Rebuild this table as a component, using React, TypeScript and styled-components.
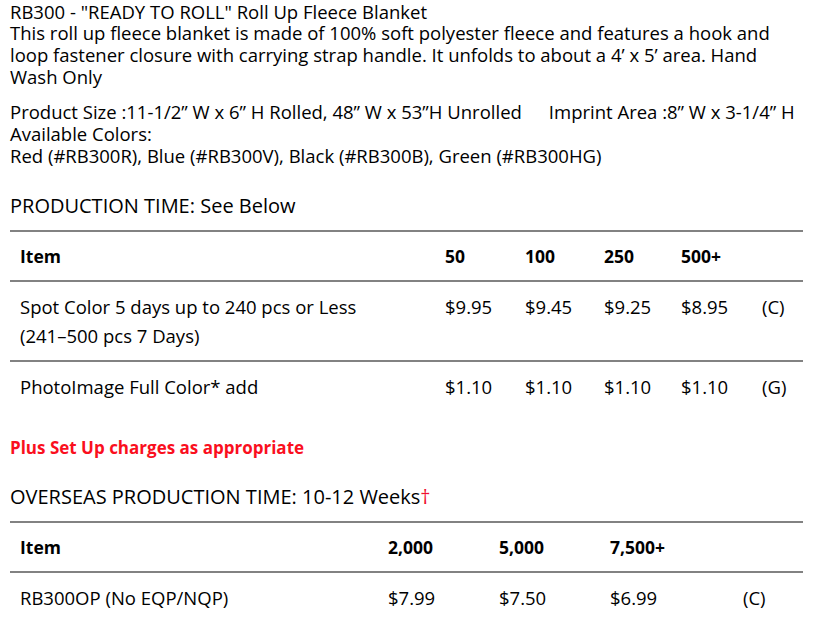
import React from "react";
import styled, { createGlobalStyle } from "styled-components";

const Global = createGlobalStyle`
  html, body { margin: 0; padding: 0; background: #fff; }
  body { font-family: "Open Sans", "Noto Sans", sans-serif; color: #000; }
`;

const Page = styled.div`
  padding: 1px 10px 0;
  width: 793px;
  font-size: 18.5px;
  line-height: 22px;
`;

const Para = styled.p<{ $mt?: number }>`
  margin: ${(p) => p.$mt ?? 0}px 0 0;
`;

const Title = styled.p`
  margin: 0;
  line-height: 21px;
`;

const SpecLine = styled.div`
  margin-top: 13px;
  white-space: nowrap;
  display: flex;
  gap: 27px;
`;

const Heading = styled.h2<{ $mt: number }>`
  margin: ${(p) => p.$mt}px 0 0;
  font-size: 20px;
  font-weight: 400;
  line-height: 28px;
`;

const Dagger = styled.span`
  color: #f0102e;
`;

const Notice = styled.p`
  margin: 26px 0 0;
  color: #fa0f1e;
  font-size: 17px;
  font-weight: 700;
`;

const Table = styled.table<{ $mt: number }>`
  margin-top: ${(p) => p.$mt}px;
  width: 793px;
  border-collapse: collapse;
  table-layout: fixed;
  font-size: 18.5px;
  line-height: 29px;
`;

const Row = styled.tr`
  border-top: 2px solid #828282;
`;

const Th = styled.th`
  text-align: left;
  font-weight: 700;
  font-size: 17.5px;
  padding: 10px 0 9px 10px;
  vertical-align: top;
`;

const Td = styled.td`
  text-align: left;
  padding: 10px 0 10px 10px;
  vertical-align: top;
`;

const t1Cols = [425, 80, 79, 77, 81, 51];
const t2Cols = [368, 111, 111, 133, 70];

const Cols = ({ widths }: { widths: number[] }) => (
  <colgroup>
    {widths.map((w, i) => (
      <col key={i} style={{ width: w }} />
    ))}
  </colgroup>
);

export default function App() {
  return (
    <>
      <Global />
      <Page>
        <Title>RB300 - "READY TO ROLL" Roll Up Fleece Blanket</Title>
        <Para>
          This roll up fleece blanket is made of 100% soft polyester fleece and features a hook and
          loop fastener closure with carrying strap handle. It unfolds to about a 4’ x 5’ area. Hand
          Wash Only
        </Para>
        <SpecLine>
          <span>Product Size :11-1/2” W x 6” H Rolled, 48” W x 53”H Unrolled</span>
          <span>Imprint Area :8” W x 3-1/4” H</span>
        </SpecLine>
        <Para>Available Colors:</Para>
        <Para>Red (#RB300R), Blue (#RB300V), Black (#RB300B), Green (#RB300HG)</Para>

        <Heading $mt={25}>PRODUCTION TIME: See Below</Heading>
        <Table $mt={10}>
          <Cols widths={t1Cols} />
          <tbody>
            <Row>
              <Th>Item</Th>
              <Th>50</Th>
              <Th>100</Th>
              <Th>250</Th>
              <Th>500+</Th>
              <Th></Th>
            </Row>
            <Row>
              <Td>
                Spot Color 5 days up to 240 pcs or Less
                <br />
                (241–500 pcs 7 Days)
              </Td>
              <Td>$9.95</Td>
              <Td>$9.45</Td>
              <Td>$9.25</Td>
              <Td>$8.95</Td>
              <Td>(C)</Td>
            </Row>
            <Row>
              <Td>PhotoImage Full Color* add</Td>
              <Td>$1.10</Td>
              <Td>$1.10</Td>
              <Td>$1.10</Td>
              <Td>$1.10</Td>
              <Td>(G)</Td>
            </Row>
          </tbody>
        </Table>

        <Notice>Plus Set Up charges as appropriate</Notice>

        <Heading $mt={24}>
          OVERSEAS PRODUCTION TIME: 10-12 Weeks<Dagger>†</Dagger>
        </Heading>
        <Table $mt={10}>
          <Cols widths={t2Cols} />
          <tbody>
            <Row>
              <Th>Item</Th>
              <Th>2,000</Th>
              <Th>5,000</Th>
              <Th>7,500+</Th>
              <Th></Th>
            </Row>
            <Row>
              <Td>RB300OP (No EQP/NQP)</Td>
              <Td>$7.99</Td>
              <Td>$7.50</Td>
              <Td>$6.99</Td>
              <Td>(C)</Td>
            </Row>
          </tbody>
        </Table>
      </Page>
    </>
  );
}
